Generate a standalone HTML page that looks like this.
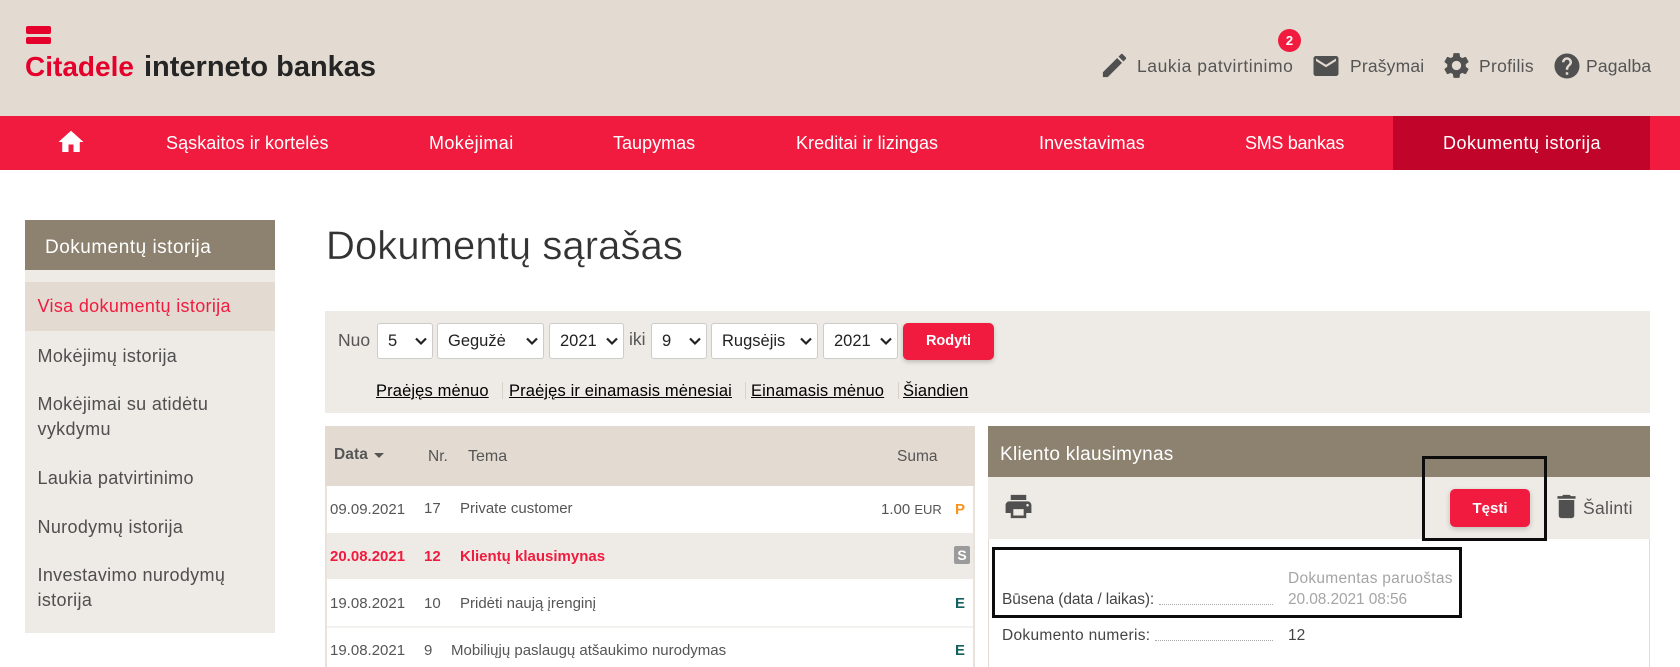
<!DOCTYPE html>
<html lang="lt"><head><meta charset="utf-8"><title>Citadele interneto bankas</title>
<style>
*{box-sizing:border-box}
html,body{margin:0;padding:0;background:#fff}
body{width:1680px;height:667px;overflow:hidden;position:relative;font-family:"Liberation Sans",Arial,sans-serif;color:#555}
.b{position:absolute}
.t{position:absolute;white-space:nowrap;line-height:20px}
svg{position:absolute;fill:#505050}
.nav{color:#fff;font-size:18px;top:133px}
.side{color:#4f4f4f;font-size:18px;left:37.5px;letter-spacing:.33px}
.top{font-size:17.5px;color:#555;top:56px}
select{position:absolute;top:323px;height:36px;background:#fff;border:1px solid #ccc;border-radius:3px;font:16.5px "Liberation Sans",Arial,sans-serif;color:#222;padding:0 0 0 10px;appearance:none;-webkit-appearance:none}
.chev{fill:none;stroke:#222;stroke-width:2.2;pointer-events:none}
.lnk{position:absolute;top:381px;font-size:16.5px;line-height:20px;color:#000;text-decoration:underline;white-space:nowrap;letter-spacing:.13px}
.sep{position:absolute;top:382px;width:1px;height:17px;background:#d8d2ca}
.r{font-size:15px;color:#555}
.red{color:#f01b3f;font-weight:bold}
</style></head><body>
<div class="b" style="left:0;top:0;width:1680px;height:116px;background:#e3dbd1"></div>
<div class="b" style="left:26px;top:26px;width:25px;height:8px;background:#e4002b;border-radius:2px"></div>
<div class="b" style="left:26px;top:37px;width:25px;height:7px;background:#e4002b;border-radius:2px"></div>
<div class="t" style="left:25px;top:52px;font-size:28px;line-height:30px;font-weight:bold;color:#e4002b">Citadele</div>
<div class="t" style="left:144px;top:52px;font-size:29px;line-height:30px;font-weight:bold;color:#252525">interneto bankas</div>

<svg style="left:1099px;top:50px" width="31" height="31" viewBox="0 0 24 24"><path d="M3 17.25V21h3.75L17.81 9.94l-3.75-3.75L3 17.25zM20.71 7.04a1 1 0 0 0 0-1.41l-2.34-2.34a1 1 0 0 0-1.41 0l-1.83 1.83 3.75 3.75 1.83-1.83z"/></svg>
<div class="t top" style="left:1137px;letter-spacing:.55px">Laukia patvirtinimo</div>
<div class="b" style="left:1278px;top:29px;width:23px;height:23px;border-radius:50%;background:#f01b3f;color:#fff;font-size:13px;font-weight:bold;text-align:center;line-height:23px">2</div>
<svg style="left:1311px;top:50.5px" width="30" height="30" viewBox="0 0 24 24"><path d="M20 4H4c-1.1 0-2 .9-2 2v12c0 1.1.9 2 2 2h16c1.1 0 2-.9 2-2V6c0-1.1-.9-2-2-2zm0 4l-8 5-8-5V6l8 5 8-5v2z"/></svg>
<div class="t top" style="left:1350px;letter-spacing:.17px">Prašymai</div>
<svg style="left:1441px;top:50px" width="31" height="31" viewBox="0 0 24 24"><path d="M19.14 12.94c.04-.3.06-.61.06-.94 0-.32-.02-.64-.07-.94l2.03-1.58c.18-.14.23-.41.12-.61l-1.92-3.32c-.12-.22-.37-.29-.59-.22l-2.39.96c-.5-.38-1.03-.7-1.62-.94l-.36-2.54c-.04-.24-.24-.41-.48-.41h-3.84c-.24 0-.43.17-.47.41l-.36 2.54c-.59.24-1.13.57-1.62.94l-2.39-.96c-.22-.08-.47 0-.59.22L2.74 8.87c-.12.21-.08.47.12.61l2.03 1.58c-.05.3-.09.63-.09.94s.02.64.07.94l-2.03 1.58c-.18.14-.23.41-.12.61l1.92 3.32c.12.22.37.29.59.22l2.39-.96c.5.38 1.03.7 1.62.94l.36 2.54c.05.24.24.41.48.41h3.84c.24 0 .44-.17.47-.41l.36-2.54c.59-.24 1.13-.56 1.62-.94l2.39.96c.22.08.47 0 .59-.22l1.92-3.32c.12-.22.07-.47-.12-.61l-2.01-1.58zM12 15.6c-1.98 0-3.6-1.62-3.6-3.6s1.62-3.6 3.6-3.6 3.6 1.62 3.6 3.6-1.62 3.6-3.6 3.6z"/></svg>
<div class="t top" style="left:1479px;letter-spacing:.3px">Profilis</div>
<svg style="left:1551.5px;top:50.5px" width="30" height="30" viewBox="0 0 24 24"><path d="M12 2C6.48 2 2 6.48 2 12s4.48 10 10 10 10-4.48 10-10S17.52 2 12 2zm1 17h-2v-2h2v2zm2.07-7.75l-.9.92C13.45 12.9 13 13.5 13 15h-2v-.5c0-1.1.45-2.1 1.17-2.83l1.24-1.26c.37-.36.59-.86.59-1.41 0-1.1-.9-2-2-2s-2 .9-2 2H8c0-2.21 1.79-4 4-4s4 1.79 4 4c0 .88-.36 1.68-.93 2.25z"/></svg>
<div class="t top" style="left:1586px;letter-spacing:.15px">Pagalba</div>

<div class="b" style="left:0;top:116px;width:1680px;height:54px;background:#f01b3f"></div>
<div class="b" style="left:1393px;top:116px;width:257px;height:54px;background:#c1052a"></div>
<svg style="left:55.5px;top:127px;fill:#fff" width="30" height="30" viewBox="0 0 24 24"><path d="M10 20v-6h4v6h5v-8h3L12 3 2 12h3v8z"/></svg>
<div class="t nav" style="left:166px;letter-spacing:.07px">Sąskaitos ir kortelės</div>
<div class="t nav" style="left:429px;letter-spacing:.4px">Mokėjimai</div>
<div class="t nav" style="left:613px;letter-spacing:.02px">Taupymas</div>
<div class="t nav" style="left:796px;letter-spacing:.05px">Kreditai ir lizingas</div>
<div class="t nav" style="left:1039px;letter-spacing:.07px">Investavimas</div>
<div class="t nav" style="left:1245px;letter-spacing:-.3px">SMS bankas</div>
<div class="t nav" style="left:1443px;letter-spacing:.5px">Dokumentų istorija</div>

<div class="b" style="left:25px;top:220px;width:250px;height:50px;background:#8d8170"></div>
<div class="t" style="left:45px;top:237.5px;font-size:19px;color:#fff;letter-spacing:.5px">Dokumentų istorija</div>
<div class="b" style="left:25px;top:270px;width:250px;height:363px;background:#eeeae5"></div>
<div class="b" style="left:25px;top:282px;width:250px;height:49px;background:#e3dbd1"></div>
<div class="t side" style="top:296px;color:#f01b3f">Visa dokumentų istorija</div>
<div class="t side" style="top:346px">Mokėjimų istorija</div>
<div class="t side" style="top:394px">Mokėjimai su atidėtu</div>
<div class="t side" style="top:419px">vykdymu</div>
<div class="t side" style="top:468px">Laukia patvirtinimo</div>
<div class="t side" style="top:517px">Nurodymų istorija</div>
<div class="t side" style="top:565px">Investavimo nurodymų</div>
<div class="t side" style="top:590px">istorija</div>

<div class="t" style="left:326px;top:223px;font-size:40px;line-height:46px;color:#333;letter-spacing:.07px;-webkit-text-stroke:.35px #fff">Dokumentų sąrašas</div>

<div class="b" style="left:325px;top:311px;width:1325px;height:102px;background:#eeeae5"></div>
<div class="t" style="left:338px;top:330px;font-size:17.5px;color:#555">Nuo</div>
<select style="left:377px;width:56px"><option>5</option></select>
<select style="left:437px;width:107px"><option>Gegužė</option></select>
<select style="left:549px;width:75px"><option>2021</option></select>
<div class="t" style="left:629px;top:329px;font-size:17.5px;color:#555">iki</div>
<select style="left:651px;width:56px"><option>9</option></select>
<select style="left:711px;width:107px"><option>Rugsėjis</option></select>
<select style="left:823px;width:75px"><option>2021</option></select>
<svg class="chev" style="left:415px;top:337px" width="12" height="9" viewBox="0 0 12 9"><path d="M1 1.5l5 5 5-5"/></svg>
<svg class="chev" style="left:526px;top:337px" width="12" height="9" viewBox="0 0 12 9"><path d="M1 1.5l5 5 5-5"/></svg>
<svg class="chev" style="left:606px;top:337px" width="12" height="9" viewBox="0 0 12 9"><path d="M1 1.5l5 5 5-5"/></svg>
<svg class="chev" style="left:689px;top:337px" width="12" height="9" viewBox="0 0 12 9"><path d="M1 1.5l5 5 5-5"/></svg>
<svg class="chev" style="left:800px;top:337px" width="12" height="9" viewBox="0 0 12 9"><path d="M1 1.5l5 5 5-5"/></svg>
<svg class="chev" style="left:880px;top:337px" width="12" height="9" viewBox="0 0 12 9"><path d="M1 1.5l5 5 5-5"/></svg>
<div class="b" style="left:903px;top:323px;width:91px;height:37px;background:#f01b3f;border-radius:5px;color:#fff;font-size:14.5px;font-weight:bold;text-align:center;line-height:36px;box-shadow:0 2px 5px rgba(0,0,0,.2)">Rodyti</div>
<a class="lnk" style="left:376px">Praėjęs mėnuo</a><div class="sep" style="left:502px"></div>
<a class="lnk" style="left:509px">Praėjęs ir einamasis mėnesiai</a><div class="sep" style="left:745px"></div>
<a class="lnk" style="left:751px">Einamasis mėnuo</a><div class="sep" style="left:898px"></div>
<a class="lnk" style="left:903px">Šiandien</a>

<div class="b" style="left:325px;top:426px;width:650px;height:60px;background:#e3dbd1"></div>
<div class="b" style="left:325px;top:486px;width:2px;height:181px;background:#e9e3dc"></div>
<div class="b" style="left:973px;top:486px;width:2px;height:181px;background:#e9e3dc"></div>
<div class="b" style="left:327px;top:533px;width:646px;height:46px;background:#eeeae5"></div>
<div class="b" style="left:327px;top:626px;width:646px;height:2px;background:#f4f2ef"></div>
<div class="t" style="left:334px;top:445px;font-size:15.5px;font-weight:bold;color:#555;letter-spacing:.1px">Data</div>
<div class="b" style="left:374px;top:453px;border:5px solid transparent;border-top:5px solid #555;border-bottom:0"></div>
<div class="t r" style="left:428px;top:447px;font-size:15.5px">Nr.</div>
<div class="t r" style="left:468px;top:447px;font-size:16px">Tema</div>
<div class="t r" style="left:897px;top:447px;font-size:15.5px">Suma</div>

<div class="t r" style="left:330px;top:500px">09.09.2021</div><div class="t r" style="left:424px;top:499px">17</div><div class="t r" style="left:460px;top:499px">Private customer</div><div class="t r" style="left:881px;top:500px">1.00 <span style="font-size:13px">EUR</span></div><div class="t" style="left:955px;top:500px;font-size:15px;font-weight:bold;color:#f7931e">P</div>
<div class="t r red" style="left:330px;top:547px">20.08.2021</div><div class="t r red" style="left:424px;top:547px">12</div><div class="t r red" style="left:460px;top:547px">Klientų klausimynas</div><div class="b" style="left:954px;top:546px;width:16px;height:18px;background:#9b9b9b;border-radius:2px;color:#fff;font-size:14px;font-weight:bold;text-align:center;line-height:18px">S</div>
<div class="t r" style="left:330px;top:594px">19.08.2021</div><div class="t r" style="left:424px;top:594px">10</div><div class="t r" style="left:460px;top:594px">Pridėti naują įrenginį</div><div class="t" style="left:955px;top:594px;font-size:15px;font-weight:bold;color:#14615f">E</div>
<div class="t r" style="left:330px;top:641px">19.08.2021</div><div class="t r" style="left:424px;top:641px">9</div><div class="t r" style="left:451px;top:641px">Mobiliųjų paslaugų atšaukimo nurodymas</div><div class="t" style="left:955px;top:641px;font-size:15px;font-weight:bold;color:#14615f">E</div>

<div class="b" style="left:988px;top:426px;width:662px;height:51px;background:#8d8170"></div>
<div class="t" style="left:1000px;top:444.5px;font-size:19px;color:#fff;letter-spacing:.3px">Kliento klausimynas</div>
<div class="b" style="left:988px;top:477px;width:662px;height:62px;background:#eeeae5"></div>
<div class="b" style="left:1649px;top:539px;width:1px;height:128px;background:#e3dbd1"></div>
<div class="b" style="left:988px;top:539px;width:1px;height:128px;background:#e3dbd1"></div>
<svg style="left:1002.5px;top:491px" width="31" height="31" viewBox="0 0 24 24"><path d="M19 8H5c-1.66 0-3 1.34-3 3v6h4v4h12v-4h4v-6c0-1.66-1.34-3-3-3zm-3 11H8v-5h8v5zm3-7c-.55 0-1-.45-1-1s.45-1 1-1 1 .45 1 1-.45 1-1 1zm-1-9H6v4h12V3z"/></svg>
<div class="b" style="left:1450px;top:489px;width:80px;height:38px;background:#f01b3f;border-radius:5px;color:#fff;font-size:15px;font-weight:bold;text-align:center;line-height:39px;box-shadow:0 2px 6px rgba(0,0,0,.2)">Tęsti</div>
<svg style="left:1550.5px;top:491px" width="31" height="31" viewBox="0 0 24 24"><path d="M6 19c0 1.1.9 2 2 2h8c1.1 0 2-.9 2-2V7H6v12zM19 4h-3.5l-1-1h-5l-1 1H5v2h14V4z"/></svg>
<div class="t" style="left:1583px;top:498px;font-size:17.5px;color:#555;letter-spacing:.3px">Šalinti</div>
<div class="b" style="left:1422px;top:456px;width:125px;height:85px;border:3px solid #0c0c0c"></div>
<div class="b" style="left:992px;top:547px;width:470px;height:71px;border:3px solid #0c0c0c"></div>

<div class="t" style="left:1288px;top:569px;font-size:15.5px;color:#a5a5a5;letter-spacing:.27px">Dokumentas paruoštas</div>
<div class="t" style="left:1288px;top:590px;font-size:15.5px;color:#a5a5a5;letter-spacing:-.1px">20.08.2021 08:56</div>
<div class="t" style="left:1002px;top:590px;font-size:15.5px;color:#444;letter-spacing:-.09px">Būsena (data / laikas):</div>
<div class="b" style="left:1159px;top:604px;width:114px;border-bottom:1px dotted #aaa"></div>
<div class="t" style="left:1002px;top:626px;font-size:15.5px;color:#444;letter-spacing:.3px">Dokumento numeris:</div>
<div class="b" style="left:1155px;top:640px;width:118px;border-bottom:1px dotted #aaa"></div>
<div class="t" style="left:1288px;top:626px;font-size:15.5px;color:#444">12</div>
</body></html>
